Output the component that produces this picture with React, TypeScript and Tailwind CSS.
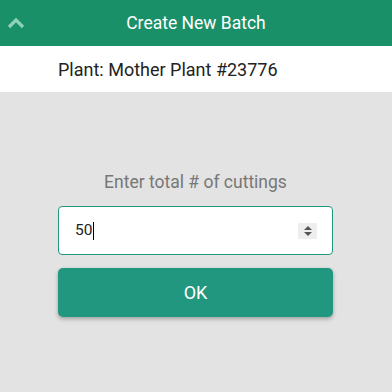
import React from "react";

export default function App() {
  return (
    <div className="w-[392px] h-[392px] bg-[#e3e3e3] flex flex-col" style={{ fontFamily: "Roboto, 'Liberation Sans', sans-serif" }}>
      <div className="h-[46px] bg-[#1a9068] flex items-center relative">
        <svg className="absolute left-[7px] top-[17px]" width="18" height="12" viewBox="0 0 18 12">
          <path d="M2 10 L9 3 L16 10" fill="none" stroke="#8fd3b6" strokeWidth="3.2" />
        </svg>
        <div className="flex-1 text-center text-white text-[17.5px] pt-[1px]">Create New Batch</div>
      </div>
      <div className="h-[46px] bg-white flex items-center pl-[58px] text-[18px] font-normal text-[#222]">
        Plant: Mother Plant #23776
      </div>
      <div className="flex flex-col w-[275px] ml-[58px] pt-[79px]">
        <div className="text-center text-[17.5px] text-[#777] leading-[22px]">Enter total # of cuttings</div>
        <div className="mt-[13px] h-[49px] bg-white border border-[#21977f] rounded-[4px] flex items-center pl-[16px] pr-[15px]">
          <span className="text-[15.5px] text-[#222]">50</span>
          <span className="w-[1px] h-[18px] bg-black ml-[1px]"></span>
          <div className="ml-auto w-[19px] h-[16px] bg-[#eeeeee] flex flex-col items-center justify-center gap-[2px]">
            <svg width="8" height="4" viewBox="0 0 8 4"><path d="M0 4 L4 0 L8 4 Z" fill="#555" /></svg>
            <svg width="8" height="4" viewBox="0 0 8 4"><path d="M0 0 L4 4 L8 0 Z" fill="#555" /></svg>
          </div>
        </div>
        <button className="mt-[13px] h-[49px] bg-[#21977f] rounded-[5px] text-white text-[18px] shadow-[0_2px_4px_rgba(0,0,0,0.3)]">
          OK
        </button>
      </div>
    </div>
  );
}
